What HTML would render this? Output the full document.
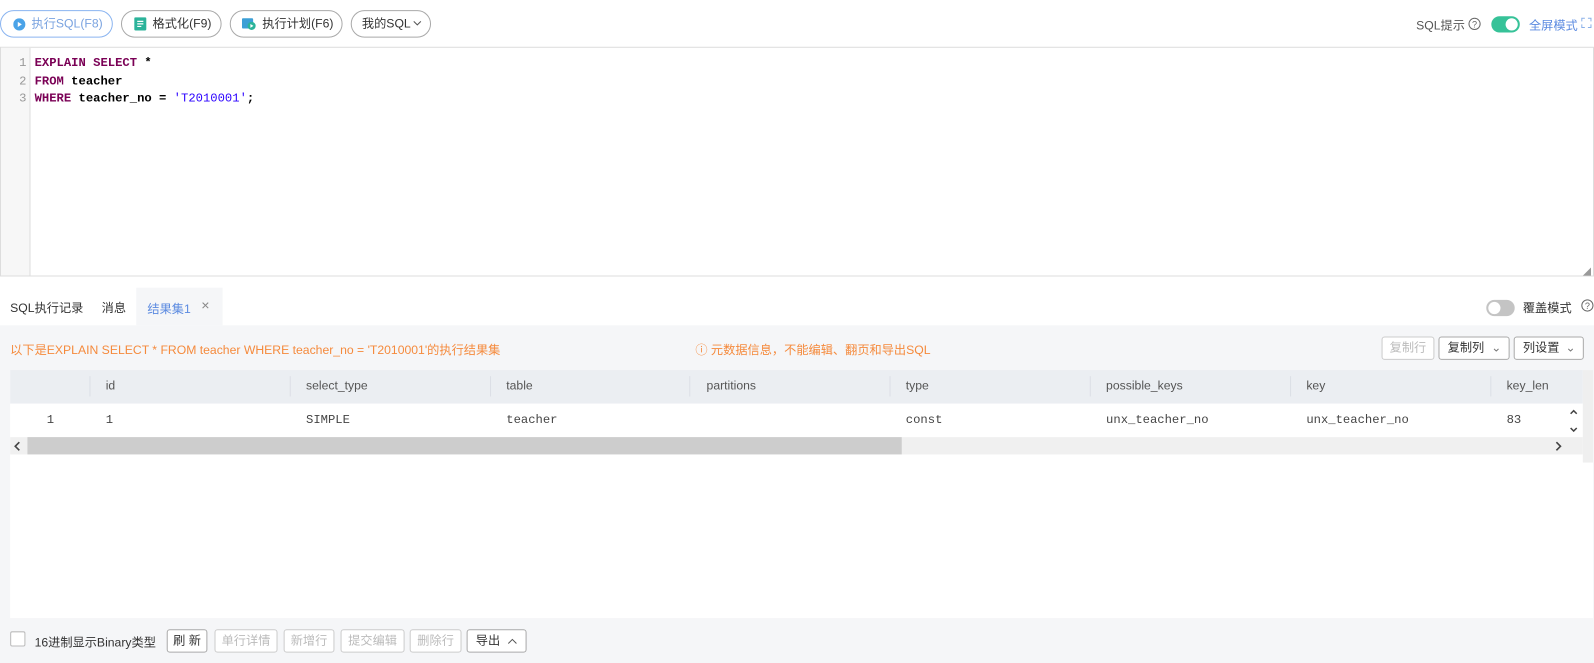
<!DOCTYPE html>
<html><head><meta charset="utf-8"><style>
*{box-sizing:border-box;margin:0;padding:0}
html,body{width:1594px;height:663px;overflow:hidden}
body{background:#fff;font-family:"Liberation Sans","Noto Sans CJK SC",sans-serif;font-size:12px;color:#333;position:relative}
#w{position:absolute;left:0;top:0;width:1568px;height:653px;transform:scale(1.01659);transform-origin:0 0}
.a{position:absolute}
.btn{position:absolute;top:10px;height:27px;border:1px solid #a9a9a9;border-radius:14px;font-size:12px;line-height:25px;color:#333;padding-left:10px;background:#fff}
.mono{font-family:"Liberation Mono","DejaVu Sans Mono",monospace;font-size:12px}
.sb{position:absolute;height:23px;border:1px solid #aaa;border-radius:3px;background:#fff;font-size:12px;line-height:21px;text-align:center;color:#333}
.dis{color:#bbb;border-color:#ccc}
.hd{position:absolute;top:372px;font-size:12px;color:#555}
.sep{position:absolute;top:370px;width:1px;height:20px;background:#dcdfe6}
.cell{position:absolute;top:406px;color:#444}
</style></head><body><div id="w">
<div class="btn" style="left:0;width:111px;border-color:#8ab4f0;color:#7aa3e0;padding-left:12px"><svg class="a" style="left:12px;top:7px" width="12" height="12"><circle cx="6" cy="6" r="6" fill="#4aa3e8"/><path d="M4.5 3.5L8.5 6L4.5 8.5Z" fill="#fff"/></svg><span style="margin-left:18px">执行SQL(F8)</span></div>
<div class="btn" style="left:119px;width:99px"><svg class="a" style="left:12px;top:6px" width="12" height="13"><rect width="12" height="13" rx="1.5" fill="#2bb39a"/><path d="M3 4h6M3 6.5h6M3 9h4" stroke="#fff" stroke-width="1.2"/></svg><span style="margin-left:20px">格式化(F9)</span></div>
<div class="btn" style="left:226px;width:111px"><svg class="a" style="left:11px;top:5px" width="14" height="14"><rect x="0" y="2" width="11" height="10" rx="1" fill="#3b9fd6"/><circle cx="9.5" cy="9.5" r="4" fill="#2bb39a"/><path d="M8.3 7.6L11.3 9.5L8.3 11.4Z" fill="#fff"/></svg><span style="margin-left:21px">执行计划(F6)</span></div>
<div class="btn" style="left:345px;width:79px">我的SQL<svg width="9" height="8" style="margin-left:2px"><path d="M1 2l3.5 3.5L8 2" stroke="#555" fill="none"/></svg></div>
<div class="a" style="left:1393px;top:16px;color:#555">SQL提示</div>
<svg class="a" style="left:1444px;top:17px" width="13" height="13"><circle cx="6.5" cy="6.5" r="5.5" stroke="#666" fill="none"/><text x="6.5" y="10" font-size="9" text-anchor="middle" fill="#666" font-family="Liberation Sans">?</text></svg>
<div class="a" style="left:1467px;top:16px;width:28px;height:16px;border-radius:8px;background:#36c298"><div class="a" style="right:2px;top:2px;width:12px;height:12px;border-radius:6px;background:#fff"></div></div>
<div class="a" style="left:1504px;top:16px;color:#5b8ae0">全屏模式</div>
<svg class="a" style="left:1555px;top:17px" width="11" height="11"><path d="M1 4V1h3M7 1h3v3M10 7v3H7M4 10H1V7" stroke="#8ab0e8" fill="none"/></svg>
<div class="a" style="left:0;top:46px;width:1568px;height:226px;border:1px solid #ddd"></div>
<div class="a" style="left:1px;top:47px;width:29px;height:224px;background:#f7f7f7;border-right:1px solid #ddd"></div>
<div class="a mono" style="left:0;top:54px;width:26px;text-align:right;color:#999;line-height:17.5px">1<br>2<br>3</div>
<div class="a mono" style="left:34px;top:54px;line-height:17.5px;color:#000;font-weight:bold">
<span style="color:#7a0055">EXPLAIN SELECT</span> *<br><span style="color:#7a0055">FROM</span> teacher<br><span style="color:#7a0055">WHERE</span> teacher_no = <span style="color:#2a00ff;font-weight:normal">'T2010001'</span>;</div>
<div class="a" style="left:1557px;top:262px;color:#999;font-size:8px">◢</div>
<div class="a" style="left:0;top:320px;width:1568px;height:333px;background:#f5f6f8"></div>
<div class="a" style="left:134px;top:283px;width:85px;height:37px;background:#f5f6f8"></div>
<div class="a" style="left:10px;top:294px;color:#333">SQL执行记录</div>
<div class="a" style="left:100px;top:294px;color:#333">消息</div>
<div class="a" style="left:145px;top:295px;color:#5b8ae0">结果集1</div>
<div class="a" style="left:198px;top:292px;color:#888;font-size:14px">×</div>
<div class="a" style="left:1462px;top:295px;width:28px;height:16px;border-radius:8px;background:#c4c4c4"><div class="a" style="left:2px;top:2px;width:12px;height:12px;border-radius:6px;background:#fff"></div></div>
<div class="a" style="left:1498px;top:294px;color:#333">覆盖模式</div>
<svg class="a" style="left:1555px;top:294px" width="13" height="13"><circle cx="6.5" cy="6.5" r="5.5" stroke="#666" fill="none"/><text x="6.5" y="10" font-size="9" text-anchor="middle" fill="#666" font-family="Liberation Sans">?</text></svg>
<div class="a" style="left:10px;top:335px;color:#f58a3c">以下是EXPLAIN SELECT * FROM teacher WHERE teacher_no = 'T2010001'的执行结果集</div>
<div class="a" style="left:684px;top:335px;color:#f58a3c">ⓘ 元数据信息，不能编辑、翻页和导出SQL</div>
<div class="sb dis" style="left:1359px;top:331px;width:52px">复制行</div>
<div class="sb" style="left:1415px;top:331px;width:70px;text-align:left;padding-left:8px">复制列 <span style="position:absolute;right:7px;color:#777">⌄</span></div>
<div class="sb" style="left:1489px;top:331px;width:69px;text-align:left;padding-left:8px">列设置 <span style="position:absolute;right:7px;color:#777">⌄</span></div>
<div class="a" style="left:10px;top:364px;width:1557px;height:244px;background:#fff"></div>
<div class="a" style="left:10px;top:364px;width:1547px;height:33px;background:#ebeef2"></div>
<div class="a" style="left:1557px;top:364px;width:10px;height:91px;background:#efefef"></div>
<div class="sep" style="left:88px"></div><div class="sep" style="left:285px"></div><div class="sep" style="left:482px"></div><div class="sep" style="left:678px"></div><div class="sep" style="left:875px"></div><div class="sep" style="left:1072px"></div><div class="sep" style="left:1269px"></div><div class="sep" style="left:1466px"></div>
<div class="hd" style="left:104px">id</div><div class="hd" style="left:301px">select_type</div><div class="hd" style="left:498px">table</div><div class="hd" style="left:695px">partitions</div><div class="hd" style="left:891px">type</div><div class="hd" style="left:1088px">possible_keys</div><div class="hd" style="left:1285px">key</div><div class="hd" style="left:1482px">key_len</div>
<div class="cell mono" style="left:46px">1</div><div class="cell mono" style="left:104px">1</div><div class="cell mono" style="left:301px">SIMPLE</div><div class="cell mono" style="left:498px">teacher</div><div class="cell mono" style="left:891px">const</div><div class="cell mono" style="left:1088px">unx_teacher_no</div><div class="cell mono" style="left:1285px">unx_teacher_no</div><div class="cell mono" style="left:1482px">83</div>
<svg class="a" style="left:1543px;top:401px" width="10" height="26"><path d="M2 6l3-3 3 3M2 20l3 3 3-3" stroke="#444" stroke-width="1.5" fill="none"/></svg>
<div class="a" style="left:10px;top:430px;width:1547px;height:17px;background:#f0f0f0"></div>
<div class="a" style="left:27px;top:430px;width:860px;height:17px;background:#cdcdcd"></div>
<svg class="a" style="left:13px;top:434px" width="8" height="10"><path d="M6 1L2 5l4 4" stroke="#444" stroke-width="1.6" fill="none"/></svg>
<svg class="a" style="left:1529px;top:434px" width="8" height="10"><path d="M2 1l4 4-4 4" stroke="#444" stroke-width="1.6" fill="none"/></svg>
<div class="a" style="left:10px;top:621px;width:15px;height:15px;border:1px solid #bbb;background:#fff;border-radius:2px"></div>
<div class="a" style="left:34px;top:623px;color:#333">16进制显示Binary类型</div>
<div class="sb" style="left:164px;top:619px;width:40px">刷 新</div>
<div class="sb dis" style="left:211px;top:619px;width:62px">单行详情</div>
<div class="sb dis" style="left:279px;top:619px;width:50px">新增行</div>
<div class="sb dis" style="left:335px;top:619px;width:63px">提交编辑</div>
<div class="sb dis" style="left:403px;top:619px;width:51px">删除行</div>
<div class="sb" style="left:459px;top:619px;width:59px;text-align:left;padding-left:8px">导出 <svg style="position:absolute;right:8px;top:7px" width="10" height="7"><path d="M1 6l4-4 4 4" stroke="#555" fill="none"/></svg></div>
</div></body></html>
